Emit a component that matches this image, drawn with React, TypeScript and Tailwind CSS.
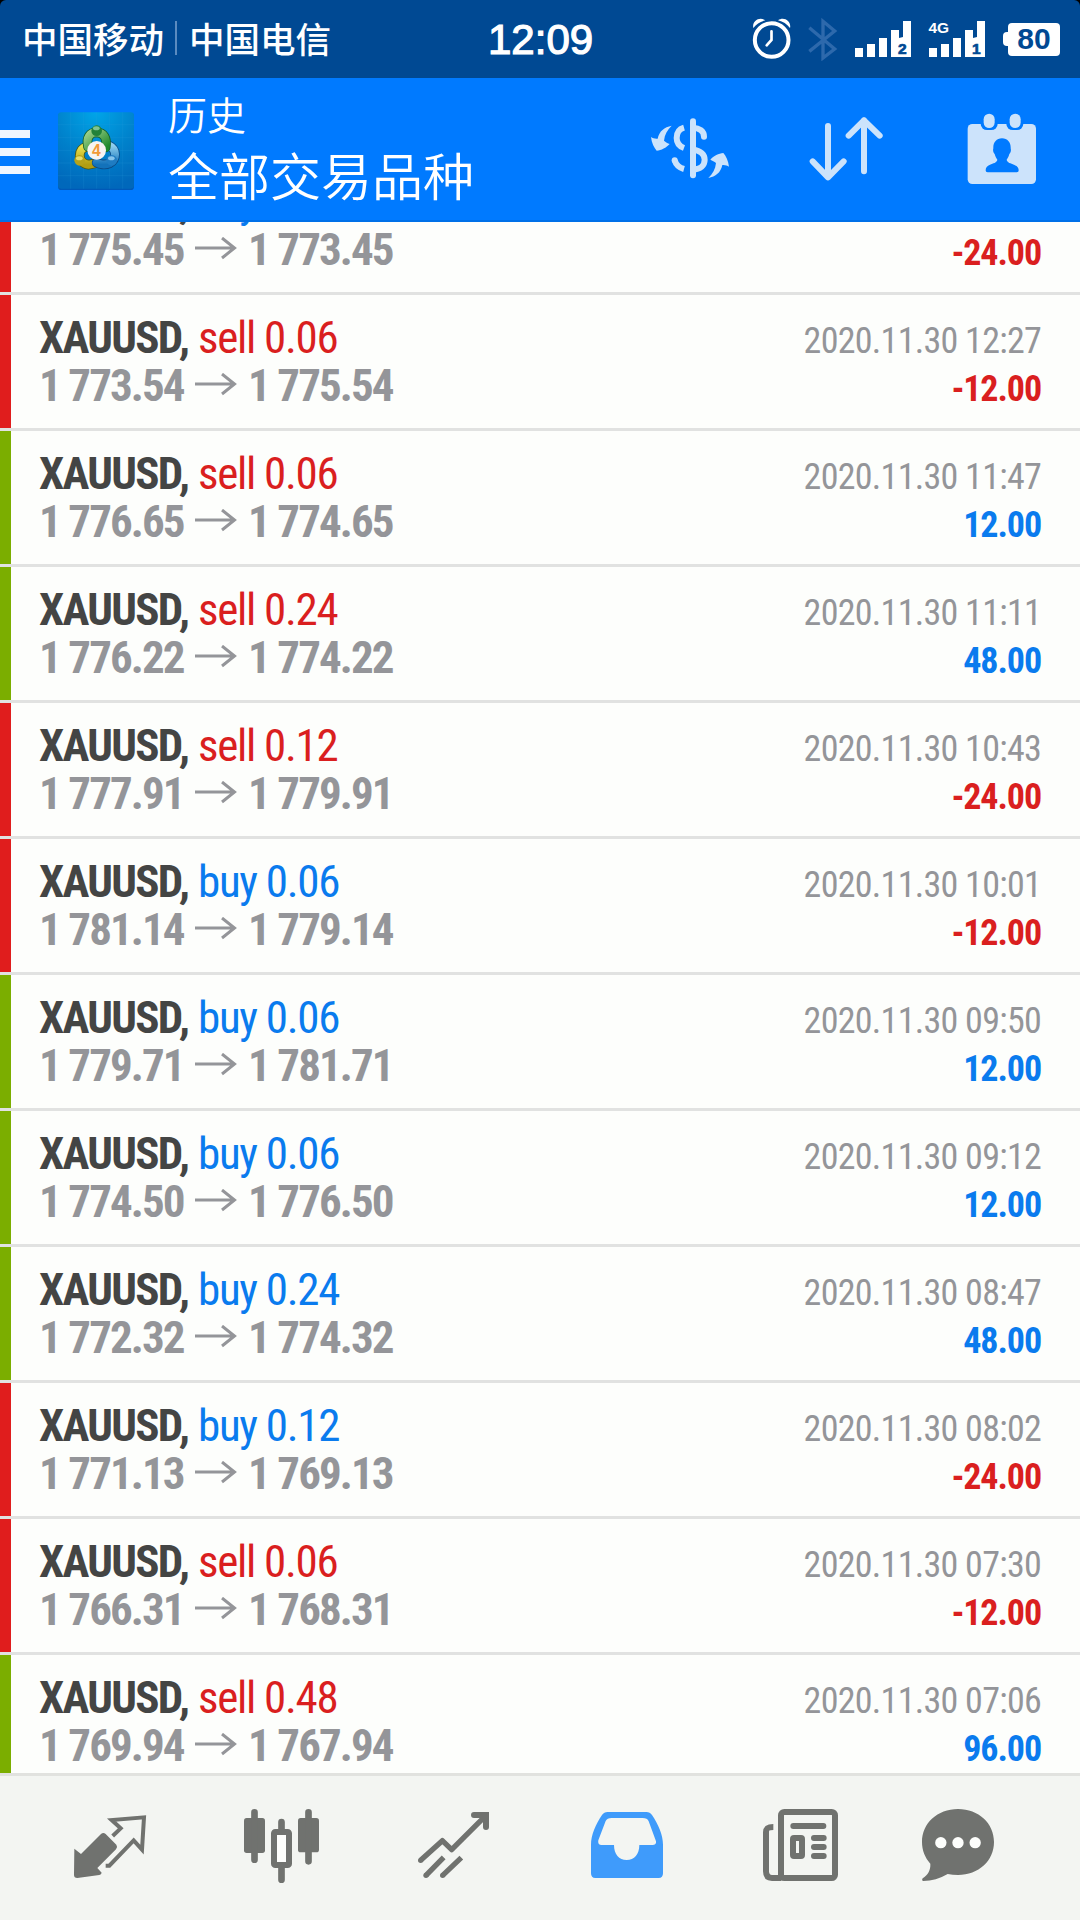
import type { ReactNode } from "react";

type Deal = {
  side: "buy" | "sell";
  volume: string;
  open: string;
  close: string;
  time: string;
  profit: string;
};

const DEALS: Deal[] = [
  { side: "buy", volume: "0.12", open: "1 775.45", close: "1 773.45", time: "2020.11.30 12:58", profit: "-24.00" },
  { side: "sell", volume: "0.06", open: "1 773.54", close: "1 775.54", time: "2020.11.30 12:27", profit: "-12.00" },
  { side: "sell", volume: "0.06", open: "1 776.65", close: "1 774.65", time: "2020.11.30 11:47", profit: "12.00" },
  { side: "sell", volume: "0.24", open: "1 776.22", close: "1 774.22", time: "2020.11.30 11:11", profit: "48.00" },
  { side: "sell", volume: "0.12", open: "1 777.91", close: "1 779.91", time: "2020.11.30 10:43", profit: "-24.00" },
  { side: "buy", volume: "0.06", open: "1 781.14", close: "1 779.14", time: "2020.11.30 10:01", profit: "-12.00" },
  { side: "buy", volume: "0.06", open: "1 779.71", close: "1 781.71", time: "2020.11.30 09:50", profit: "12.00" },
  { side: "buy", volume: "0.06", open: "1 774.50", close: "1 776.50", time: "2020.11.30 09:12", profit: "12.00" },
  { side: "buy", volume: "0.24", open: "1 772.32", close: "1 774.32", time: "2020.11.30 08:47", profit: "48.00" },
  { side: "buy", volume: "0.12", open: "1 771.13", close: "1 769.13", time: "2020.11.30 08:02", profit: "-24.00" },
  { side: "sell", volume: "0.06", open: "1 766.31", close: "1 768.31", time: "2020.11.30 07:30", profit: "-12.00" },
  { side: "sell", volume: "0.48", open: "1 769.94", close: "1 767.94", time: "2020.11.30 07:06", profit: "96.00" },
];

function AlarmIcon() {
  return (
    <svg viewBox="36 28 120 126" className="h-[42px] w-10" fill="none" stroke="#fff">
      <circle cx="95" cy="94" r="50.5" strokeWidth="12" />
      <path d="M94.500 68V94L80 110" strokeWidth="8" strokeLinecap="round" />
      <path d="M40 58C35 38 58 22 76 35C60 39 50 46 40 58Z" fill="#fff" stroke="none" />
      <path d="M150 58C155 38 132 22 114 35C130 39 140 46 150 58Z" fill="#fff" stroke="none" />
    </svg>
  );
}

function BluetoothIcon() {
  return (
    <svg viewBox="200 18 96 132" className="h-11 w-8" fill="none" stroke="#2d69ac" strokeWidth="10">
      <path d="M207 50L283 114L248 141V31L283 60L207 121" />
    </svg>
  );
}

function SignalIcon({ slot, network }: { slot: string; network?: string }) {
  return (
    <svg viewBox="0 0 56 36" className="h-9 w-14 overflow-visible" fill="#fff">
      <path d="M0 27h8v9H0zM12 23h8v13h-8zM24 17h8v19h-8zM36 9h8v8l4-1V0h8v36H36z" />
      <text
        x="51.5"
        y="33"
        textAnchor="end"
        fill="#004993"
        stroke="#004993"
        strokeWidth="0.7"
        className="font-['Liberation_Sans'] text-[15.500px] font-bold"
      >
        {slot}
      </text>
      {network && (
        <text x="-0.500" y="11.700" className="font-['Liberation_Sans'] text-[15.500px] font-bold">
          {network}
        </text>
      )}
    </svg>
  );
}

function StatusBar() {
  return (
    <div className="flex h-[78px] items-center rounded-t-md bg-[#004993] pl-[22px] pr-5 text-white">
      <div className="mb-0.5 flex w-[466px] items-center font-['Noto_Sans_CJK_SC'] text-[35.500px] leading-none font-medium">
        <span>中国移动</span>
        <span className="mr-3 ml-[11px] h-[34px] w-0.5 bg-[#5b8bc0]" />
        <span>中国电信</span>
      </div>
      <span className="w-[264px] pt-0.5 font-['Liberation_Sans'] text-[42px] leading-none [-webkit-text-stroke:1.2px_#fff]">
        12:09
      </span>
      <AlarmIcon />
      <div className="ml-[15px]">
        <BluetoothIcon />
      </div>
      <div className="mb-px ml-4">
        <SignalIcon slot="2" />
      </div>
      <div className="mb-px ml-[18px]">
        <SignalIcon slot="1" network="4G" />
      </div>
      <div className="ml-[18px] flex items-center">
        <span className="h-3.5 w-[5px] rounded-l-sm bg-white" />
        <span className="flex h-[33px] w-[52px] items-center justify-center rounded bg-white font-['Liberation_Sans'] text-[30px] leading-none font-bold text-[#004993]">
          80
        </span>
      </div>
    </div>
  );
}

function AppLogo() {
  return (
    <svg viewBox="54 36 228 234" className="h-[78px] w-[76px]">
      <defs>
        <radialGradient id="tile" cx="0.5" cy="0" r="1">
          <stop offset="0" stopColor="#00a5e8" />
          <stop offset="0.550" stopColor="#0081cb" />
          <stop offset="1" stopColor="#0068bb" />
        </radialGradient>
        <linearGradient id="green" x1="0" y1="0" x2="1" y2="1">
          <stop offset="0" stopColor="#9ed08a" />
          <stop offset="1" stopColor="#1f8a2c" />
        </linearGradient>
        <linearGradient id="yellow" x1="0" y1="0" x2="0" y2="1">
          <stop offset="0" stopColor="#e9e04c" />
          <stop offset="1" stopColor="#b09d12" />
        </linearGradient>
        <linearGradient id="blue" x1="0" y1="0" x2="0" y2="1">
          <stop offset="0" stopColor="#8fd0ef" />
          <stop offset="1" stopColor="#1372ba" />
        </linearGradient>
      </defs>
      <rect x="54" y="40" width="228" height="230" rx="10" fill="#0058b8" />
      <rect x="54" y="37" width="228" height="229" rx="10" fill="url(#tile)" />
      <path
        d="M92 37V266M131 37V266M170 37V266M209 37V266M248 37V266M54 74H282M54 113H282M54 151H282M54 189H282M54 227H282"
        stroke="#2fa0e0"
        strokeOpacity="0.350"
        strokeWidth="1.500"
      />
      <g strokeLinecap="round" fill="none">
        <path d="M141 140C112 144 110 190 146 194L166 190" stroke="#4d5610" strokeWidth="29" />
        <path d="M141 140C112 144 110 190 146 194L166 190" stroke="url(#yellow)" strokeWidth="24" />
        <path d="M206 136C232 148 230 178 209 190C195 196 178 193 170 188" stroke="#0b4a86" strokeWidth="29" />
        <path d="M206 136C232 148 230 178 209 190C195 196 178 193 170 188" stroke="url(#blue)" strokeWidth="24" />
        <path d="M144 140C138 112 150 97 170 97C192 98 202 114 197 142" stroke="#14602a" strokeWidth="29" />
        <path d="M144 140C138 112 150 97 170 97C192 98 202 114 197 142" stroke="url(#green)" strokeWidth="24" />
      </g>
      <circle cx="170" cy="92" r="16" fill="#22823a" />
      <ellipse cx="169" cy="85" rx="10" ry="6" fill="#7fc391" />
      <circle cx="119" cy="181" r="16" fill="#b5a31a" />
      <ellipse cx="118" cy="175" rx="10" ry="6" fill="#e6dd6b" />
      <circle cx="215" cy="181" r="16" fill="#1f7cc2" />
      <ellipse cx="214" cy="175" rx="10" ry="6" fill="#86c4ec" />
      <circle cx="170" cy="151" r="28" fill="#f6f4f2" />
      <text x="169" y="167" textAnchor="middle" fill="#f19a38" className="font-['Liberation_Sans'] text-[47px] font-bold">
        4
      </text>
    </svg>
  );
}

function CurrencyIcon() {
  return (
    <svg viewBox="30 50 240 189" className="h-[63px] w-20" fill="none" stroke="#cce3fb" strokeWidth="18">
      <path
        id="swoosh"
        d="M95 76C73 80 58 92 53 115C45 116 38 113 33 110C35 128 42 142 50 151C64 150 79 142 89 131C83 128 77 126 72 121C74 102 82 88 95 76Z"
        fill="#cce3fb"
        stroke="none"
      />
      <use href="#swoosh" transform="rotate(180 150 154.500)" />
      <path d="M159 63V225" strokeLinecap="round" />
      <path d="M159 82C178 83 192 92 192 109" strokeLinecap="round" />
      <path d="M159 148C183 151 194 163 194 178C194 195 181 207 159 207" />
      <path d="M132 82C118 86 110 98 110 113C110 127 118 138 132 143" />
      <path d="M104 180C108 193 118 202 132 206" />
      <circle cx="104" cy="180" r="9" fill="#cce3fb" stroke="none" />
    </svg>
  );
}

function SortIcon() {
  return (
    <svg
      viewBox="507 50 222 195"
      className="h-[65px] w-[74px]"
      fill="none"
      stroke="#cce3fb"
      strokeWidth="18"
      strokeLinecap="round"
      strokeLinejoin="round"
    >
      <path d="M564 80V234M518 186L564 234L611 186" />
      <path d="M672 216V63M626 109L672 63L719 109" />
    </svg>
  );
}

function CalendarIcon() {
  return (
    <svg viewBox="141 339 210 216" className="h-[72px] w-[70px]" fill="#cce3fb">
      <rect x="143" y="372" width="205" height="180" rx="14" />
      <g fill="#007aff">
        <rect x="182" y="334" width="51" height="56" rx="19" />
        <rect x="259" y="334" width="51" height="56" rx="19" />
        <path d="M246 415C263 415 273 428 272 445C274 451 272 459 268 462C266 471 262 475 260 479C261 488 273 490 282 494C292 498 296 503 296 511C296 515 294 517 290 517H203C199 517 197 515 197 511C197 503 201 498 210 494C219 490 231 488 232 479C229 475 226 470 224 462C220 459 218 451 220 445C219 428 229 415 246 415Z" />
      </g>
      <rect x="191" y="341" width="33" height="43" rx="16.500" />
      <rect x="269" y="341" width="33" height="43" rx="16.500" />
    </svg>
  );
}

function Header() {
  return (
    <header className="flex h-36 items-center border-b-2 border-[#0070e8] bg-[#007aff]">
      <div className="mt-1.5 flex w-[30px] flex-col gap-2.5">
        <span className="h-2 bg-[#f0f6ff]" />
        <span className="h-2 bg-[#f0f6ff]" />
        <span className="h-2 bg-[#f0f6ff]" />
      </div>
      <div className="mt-1 ml-7">
        <AppLogo />
      </div>
      <div className="-mt-[7px] ml-[34px] w-[482px] font-['Noto_Sans_CJK_SC'] text-white">
        <div className="h-[57px] text-[39px] leading-[44px] font-[350]">历史</div>
        <div className="text-[51px] leading-[52px] font-[350]">全部交易品种</div>
      </div>
      <div className="-mt-0.5">
        <CurrencyIcon />
      </div>
      <div className="-mt-0.5 ml-[79px]">
        <SortIcon />
      </div>
      <div className="ml-[84px]">
        <CalendarIcon />
      </div>
    </header>
  );
}

function DealRow({ deal }: { deal: Deal }) {
  const loss = deal.profit.startsWith("-");

  return (
    <div className="flex h-[136px] shrink-0 border-b-3 border-[#e1e2e1] font-['Roboto_Condensed']">
      <div className={`w-[11px] ${loss ? "bg-[#e01d1d]" : "bg-[#7bae00]"}`} />
      <div className="flex-1 pt-[19px] pr-[39px] pl-7">
        <div className="flex h-12 items-baseline justify-between text-[45px] leading-[48px]">
          <div className="flex items-baseline">
            <span className="w-[159px] font-bold tracking-[-1.700px] text-[#444544]">XAUUSD,</span>
            <span className={`tracking-[-1.300px] ${deal.side === "sell" ? "text-[#da1f1f]" : "text-[#0a7bee]"}`}>
              {deal.side} {deal.volume}
            </span>
          </div>
          <span className="text-4xl leading-[48px] tracking-[-0.720px] text-[#949599]">{deal.time}</span>
        </div>
        <div className="flex h-12 items-baseline justify-between text-[45px] leading-[48px] font-bold">
          <div className="flex items-baseline tracking-[-1.900px] text-[#949599]">
            <span className="w-[156px]">{deal.open}</span>
            <svg viewBox="0 0 42 28" className="mr-[11px] h-7 w-[42px]" fill="none" stroke="#949599" strokeWidth="3">
              <path d="M0 11H39M27 1L39.500 11L27 21" />
            </svg>
            <span>{deal.close}</span>
          </div>
          <span
            className={`text-4xl leading-[48px] tracking-[-1.100px] ${loss ? "text-[#da1f1f]" : "text-[#0a7bee]"}`}
          >
            {deal.profit}
          </span>
        </div>
      </div>
    </div>
  );
}

function TabIcon({ viewBox, children }: { viewBox: string; children: ReactNode }) {
  return (
    <svg viewBox={viewBox} className="size-20" fill="#70726f">
      {children}
    </svg>
  );
}

function TabBar() {
  return (
    <nav className="flex h-[147px] gap-[92px] border-t-3 border-[#e1e2df] bg-[#f3f5f2] pt-[29px] pl-[70px]">
      {/* Quotes */}
      <TabIcon viewBox="90 135 240 240">
        <path d="M103 266L123 282L183 222Q190 216 197 222L229 254Q234 261 228 268L172 324L185 338Q184 344 178 345L112 354Q102 354 102 345Z" />
        <path d="M218 228L242 205L215 180L312 172L306 269L281 241L208 317H197" fill="none" stroke="#70726f" strokeWidth="12" />
      </TabIcon>
      {/* Charts */}
      <TabIcon viewBox="606 135 240 240">
        <rect x="612" y="174" width="63" height="105" rx="8" />
        <rect x="774" y="174" width="63" height="103" rx="8" />
        <path d="M643.500 157V299M805.500 157V304M724.500 186V214M724.500 322V359" stroke="#70726f" strokeWidth="20" strokeLinecap="round" />
        <rect x="702" y="216" width="45" height="99" rx="4" fill="#fdfefc" stroke="#70726f" strokeWidth="18" />
      </TabIcon>
      {/* Trade */}
      <TabIcon viewBox="1122 135 240 240">
        <g fill="none" stroke="#70726f" strokeWidth="16">
          <path d="M1142 301L1207 242L1235 269L1338 166" strokeLinejoin="round" />
          <path d="M1302 165H1338V201" strokeWidth="18" strokeLinecap="round" />
          <path d="M1158 346L1211 292M1208 346L1264 293" />
        </g>
        <circle cx="1142" cy="301" r="8" />
        <circle cx="1158" cy="346" r="8" />
        <circle cx="1208" cy="346" r="8" />
      </TabIcon>
      {/* History, the selected tab */}
      <TabIcon viewBox="78 135 240 240">
        <path
          fill="#3f9bfb"
          fillRule="evenodd"
          d="M143 156H259Q270 156 276 165C295 193 309 225 309 254V340Q309 354 296 354H106Q93 354 93 340V254C93 225 107 193 126 165Q132 156 143 156ZM155 174Q141 174 137 183L115 241Q112 255 125 255H162C162 282 177 300 200 300C223 300 238 282 238 255H277Q290 255 288 244L266 184Q262 174 248 174Z"
        />
      </TabIcon>
      {/* News */}
      <TabIcon viewBox="594 135 240 240">
        <g fill="none" stroke="#70726f" strokeWidth="18">
          <rect x="663" y="156" width="162" height="198" rx="10" />
          <path d="M640 201C624 201 618 204 618 217V334Q618 354 636 354H664" />
          <rect x="699" y="234" width="27" height="54" rx="3" />
          <path d="M700 198H790M762 234H791M762 261H791M762 288H791" strokeLinecap="round" />
        </g>
      </TabIcon>
      {/* Messages */}
      <div className="-ml-3">
        <TabIcon viewBox="1074 135 240 240">
          <path d="M1194 147C1256 147 1302 190 1302 246C1302 302 1256 345 1194 345C1183 345 1173 344 1163 342C1140 356 1115 363 1090 363Q1084 362 1088 355C1104 344 1112 331 1111 311C1095 293 1086 271 1086 246C1086 190 1132 147 1194 147Z" />
          <g fill="#fdfefc">
            <circle cx="1142.500" cy="248" r="17" />
            <circle cx="1194" cy="248" r="17" />
            <circle cx="1245.500" cy="248" r="17" />
          </g>
        </TabIcon>
      </div>
    </nav>
  );
}

export default function App() {
  return (
    <div className="flex h-[1920px] w-[1080px] flex-col overflow-hidden bg-black">
      <StatusBar />
      <Header />
      <main className="flex flex-1 flex-col overflow-hidden bg-[#fdfefc]">
        {/* the list is scrolled part way into its first row */}
        <div className="-mt-[63px] flex flex-col">
          {DEALS.map((deal) => (
            <DealRow key={deal.time} deal={deal} />
          ))}
        </div>
      </main>
      <TabBar />
    </div>
  );
}
